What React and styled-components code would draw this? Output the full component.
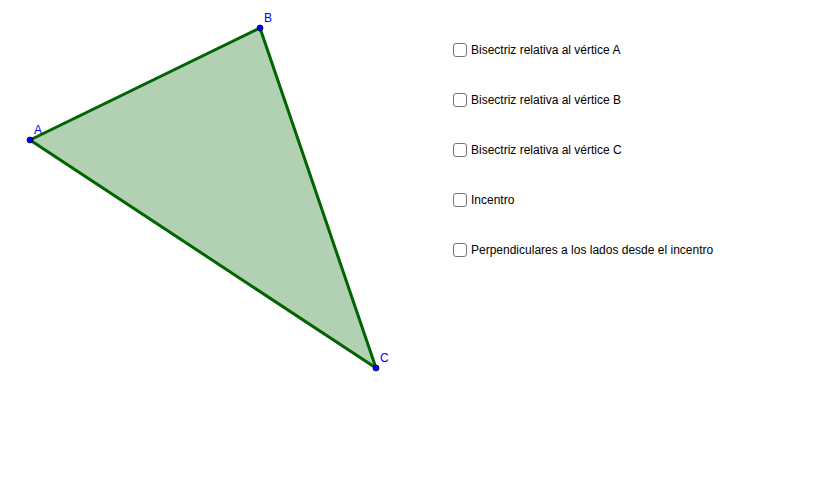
import React, { useState } from "react";
import styled, { createGlobalStyle } from "styled-components";

const GlobalStyle = createGlobalStyle`
  html, body {
    margin: 0;
    padding: 0;
    background: #ffffff;
  }
  body {
    font-family: "Liberation Sans", Arial, sans-serif;
  }
`;

const points = {
  A: { x: 30, y: 140, lx: 34, ly: 134 },
  B: { x: 260, y: 28, lx: 264, ly: 22 },
  C: { x: 376, y: 368, lx: 380, ly: 362 },
};

const options = [
  "Bisectriz relativa al vértice A",
  "Bisectriz relativa al vértice B",
  "Bisectriz relativa al vértice C",
  "Incentro",
  "Perpendiculares a los lados desde el incentro",
];

const Page = styled.div`
  display: flex;
  width: 822px;
  height: 493px;
  overflow: hidden;
  background: #ffffff;
`;

const Canvas = styled.svg`
  flex: 0 0 453px;
  height: 493px;
  display: block;
`;

const Controls = styled.div`
  display: flex;
  flex-direction: column;
  gap: 36px;
  padding-top: 43px;
`;

const Row = styled.label`
  display: flex;
  align-items: center;
  gap: 4px;
  height: 14px;
  cursor: pointer;
  font-size: 12px;
  color: #000000;
  white-space: nowrap;
`;

const Box = styled.span`
  box-sizing: border-box;
  width: 14px;
  height: 14px;
  border: 1px solid #767676;
  border-radius: 3px;
  background: ${(props) => (props.checked ? "#6557d2" : "#ffffff")};
`;

const Triangle = () => (
  <>
    <polygon
      points={`${points.A.x},${points.A.y} ${points.B.x},${points.B.y} ${points.C.x},${points.C.y}`}
      fill="#006400"
      fillOpacity="0.3"
      stroke="#006400"
      strokeWidth="3"
      strokeLinejoin="round"
    />
    {Object.entries(points).map(([name, p]) => (
      <g key={name}>
        <circle cx={p.x} cy={p.y} r="3" fill="#0000ff" stroke="#000033" strokeWidth="0.8" />
        <text
          x={p.lx}
          y={p.ly}
          fill="#0000ff"
          fontSize="12"
          fontFamily="Liberation Sans, Arial, sans-serif"
        >
          {name}
        </text>
      </g>
    ))}
  </>
);

const App = () => {
  const [checked, setChecked] = useState(options.map(() => false));

  const toggle = (i) => {
    setChecked(checked.map((c, j) => (j === i ? !c : c)));
  };

  return (
    <>
      <GlobalStyle />
      <Page>
        <Canvas viewBox="0 0 453 493">
          <Triangle />
        </Canvas>
        <Controls>
          {options.map((text, i) => (
            <Row key={text} onClick={() => toggle(i)}>
              <Box checked={checked[i]} />
              {text}
            </Row>
          ))}
        </Controls>
      </Page>
    </>
  );
};

export default App;
